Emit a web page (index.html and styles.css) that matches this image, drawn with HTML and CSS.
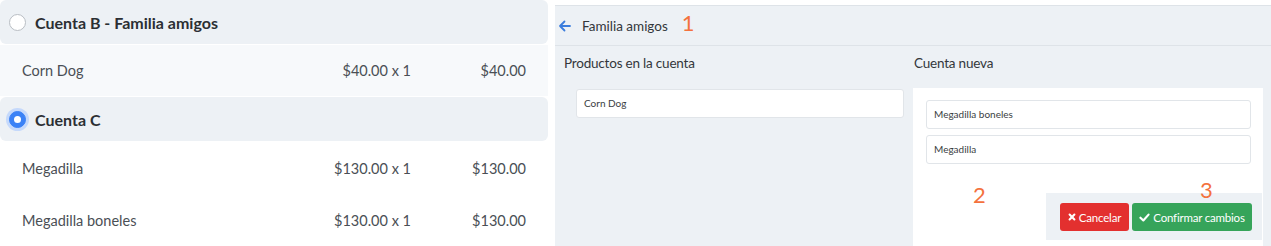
FILE: index.html
```html
<!DOCTYPE html>
<html lang="es">
<head>
    <meta charset="UTF-8">
    <title>Dividir cuenta</title>
    <link rel="stylesheet" href="styles.css">
</head>
<body>
    <div class="accounts">
        <div class="account-head">
            <span class="radio"></span>
            <span>Cuenta B - Familia amigos</span>
        </div>
        <div class="item-row shaded">
            <span>Corn Dog</span>
            <span class="num">$40.00 x 1</span>
            <span class="num">$40.00</span>
        </div>

        <div class="account-head">
            <span class="radio checked"></span>
            <span>Cuenta C</span>
        </div>
        <div class="item-row">
            <span>Megadilla</span>
            <span class="num">$130.00 x 1</span>
            <span class="num">$130.00</span>
        </div>
        <div class="item-row">
            <span>Megadilla boneles</span>
            <span class="num">$130.00 x 1</span>
            <span class="num">$130.00</span>
        </div>
    </div>

    <div class="split">
        <div class="split-head">
            <svg class="back" width="13" height="12" viewBox="0 0 13 12">
                <path d="M12 6H2M6.5 1.5L2 6l4.5 4.5" fill="none" stroke="#3b7ddd" stroke-width="1.8" stroke-linecap="round" stroke-linejoin="round"/>
            </svg>
            <span class="split-title">Familia amigos</span>
            <span class="mark">1</span>
        </div>

        <div class="split-body">
            <div class="col col-left">
                <div class="col-title">Productos en la cuenta</div>
                <div class="product">Corn Dog</div>
            </div>
            <div class="col col-right">
                <div class="col-title">Cuenta nueva</div>
                <div class="new-card">
                    <div class="product">Megadilla boneles</div>
                    <div class="product">Megadilla</div>
                    <span class="mark mark-2">2</span>
                    <span class="mark mark-3">3</span>
                    <div class="actions">
                        <button class="btn btn-cancel">
                            <svg width="8" height="8" viewBox="0 0 10 10"><path d="M2 2l6 6M8 2l-6 6" stroke="#fff" stroke-width="2.6" stroke-linecap="round"/></svg>Cancelar
                        </button>
                        <button class="btn btn-ok">
                            <svg width="11" height="9" viewBox="0 0 12 10"><path d="M1.5 5.2l3.2 3.1L10.5 1.8" fill="none" stroke="#fff" stroke-width="2.4" stroke-linecap="round" stroke-linejoin="round"/></svg>Confirmar cambios
                        </button>
                    </div>
                </div>
            </div>
        </div>
    </div>
</body>
</html>
```

FILE: styles.css
```css
body {
    margin: 0;
    font-family: Lato, "Open Sans", sans-serif;
    background-color: #fff;
    display: flex;
    gap: 7px;
    height: 246px;
    overflow: hidden;
}

/* lista de cuentas */
.accounts {
    width: 548px;
    flex: none;
}
.account-head {
    display: flex;
    align-items: center;
    gap: 9px;
    height: 44px;
    padding-left: 9px;
    background-color: #edf1f5;
    border-radius: 6px;
    font-size: 16px;
    font-weight: bold;
    color: #2b2f33;
}
.account-head + .item-row {
    margin-top: 1px;
}
.item-row + .account-head {
    margin-top: 1px;
}
.radio {
    width: 15px;
    height: 15px;
    border: 1px solid #b9bec4;
    border-radius: 50%;
    background-color: #fff;
}
.radio.checked {
    border-color: #3b82f6;
    background-color: #3b82f6;
    box-shadow: 0 0 0 3px #c5d9fb;
    position: relative;
}
.radio.checked::after {
    content: "";
    position: absolute;
    left: 4px;
    top: 4px;
    width: 7px;
    height: 7px;
    border-radius: 50%;
    background-color: #fff;
}
.item-row {
    display: grid;
    grid-template-columns: 1fr 140px 115px;
    align-items: center;
    height: 52px;
    padding: 0 22px;
    font-size: 14.5px;
    color: #4a4f55;
}
.item-row.shaded {
    height: 51px;
    background-color: #f7f9fb;
}
.num {
    text-align: right;
}

/* panel de division */
.split {
    flex: 1;
    height: 242px;
    margin-top: 5px;
    border-top: 1px solid #dee3e8;
    background-color: #edf1f5;
    color: #33373b;
}
.split-head {
    display: flex;
    align-items: center;
    height: 39px;
    padding-left: 3px;
    border-bottom: 1px solid #dee3e8;
}
.back {
    margin-right: 11px;
}
.split-title {
    font-size: 13.5px;
}
.mark {
    color: #f4713d;
    font-size: 22px;
    line-height: 1;
}
.split-head .mark {
    margin-left: 14px;
    margin-top: -6px;
}
.split-body {
    display: flex;
}
.col-title {
    height: 42px;
    padding-top: 9px;
    box-sizing: border-box;
    font-size: 13.5px;
    letter-spacing: -0.2px;
}
.col-left {
    width: 358px;
    padding-left: 9px;
    box-sizing: border-box;
}
.col-left .product {
    margin: 1px 9px 0 12px;
}
.col-right {
    width: 350px;
}
.col-right .col-title {
    padding-left: 1px;
}
.new-card {
    position: relative;
    height: 158px;
    background-color: #fff;
    padding: 12px 12px 0 13px;
    box-sizing: border-box;
}
.product {
    height: 27px;
    line-height: 27px;
    padding-left: 7px;
    background-color: #fff;
    border: 1px solid #e1e5e9;
    border-radius: 3px;
    font-size: 10px;
    color: #3a3e42;
}
.new-card .product + .product {
    margin-top: 6px;
}
.mark-2 {
    position: absolute;
    left: 60px;
    top: 96px;
}
.mark-3 {
    position: absolute;
    left: 287px;
    top: 91px;
}
.actions {
    display: flex;
    gap: 3px;
    width: 216px;
    height: 47px;
    margin: 29px -11px 0 auto;
    padding: 10px 0 0 14px;
    box-sizing: border-box;
    background-color: #edf1f5;
}
.btn {
    display: flex;
    align-items: center;
    justify-content: center;
    gap: 3px;
    height: 28px;
    padding: 0;
    border: none;
    border-radius: 3px;
    font-family: Lato, "Open Sans", sans-serif;
    font-size: 11.5px;
    letter-spacing: -0.2px;
    white-space: nowrap;
    color: #fff;
}
.btn-cancel {
    width: 69px;
    background-color: #e3302f;
}
.btn-ok {
    width: 120px;
    background-color: #36a45a;
}
```
